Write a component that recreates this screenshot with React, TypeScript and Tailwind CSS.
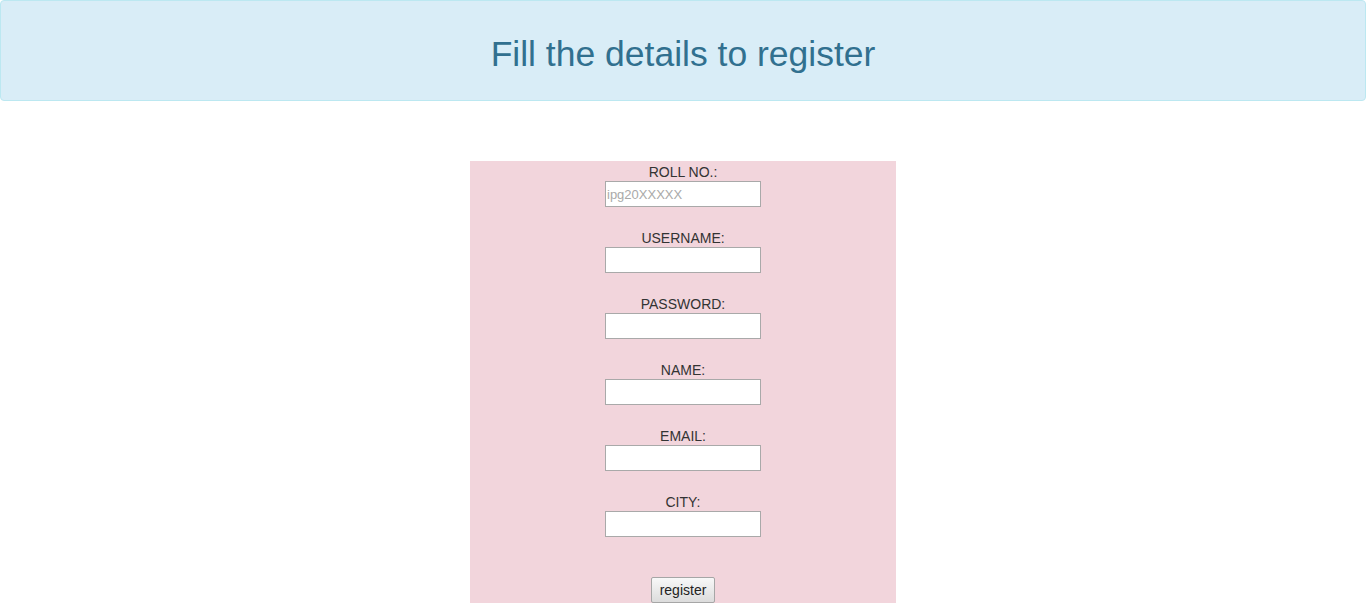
const fields = [
  { label: 'ROLL NO.:', placeholder: 'ipg20XXXXX' },
  { label: 'USERNAME:' },
  { label: 'PASSWORD:', type: 'password' },
  { label: 'NAME:' },
  { label: 'EMAIL:' },
  { label: 'CITY:' },
];

export default function App() {
  return (
    <div className="min-h-screen bg-white font-['Liberation_Sans',Arial,sans-serif] text-[#333]">
      <div className="h-[101px] flex items-center justify-center bg-[#d9edf7] border border-[#bce8f1] rounded">
        <h1 className="text-[35.5px] text-[#31708f] leading-none pt-[9px]">Fill the details to register</h1>
      </div>

      <div className="flex justify-center pt-[60px]">
        <form className="w-[426px] bg-[#f2d5dc] flex flex-col items-center pt-[3px] pb-4">
          {fields.map((f) => (
            <div key={f.label} className="flex flex-col items-center mb-[23px]">
              <label className="text-[14px] leading-[17px] text-[#333]">{f.label}</label>
              <input
                type={f.type ?? 'text'}
                placeholder={f.placeholder}
                className="w-[156px] h-[26px] px-[1px] bg-white border border-[#a9a9a9] text-[13px] placeholder:text-[#a9a9a9] outline-none"
              />
            </div>
          ))}
          <button
            type="button"
            className="mt-[17px] h-[26px] px-[8px] text-[14px] text-[#222] border border-[#a6a6a6] rounded-[2px] bg-gradient-to-b from-[#f8f8f8] to-[#dcdcdc]"
          >
            register
          </button>
        </form>
      </div>
    </div>
  );
}
